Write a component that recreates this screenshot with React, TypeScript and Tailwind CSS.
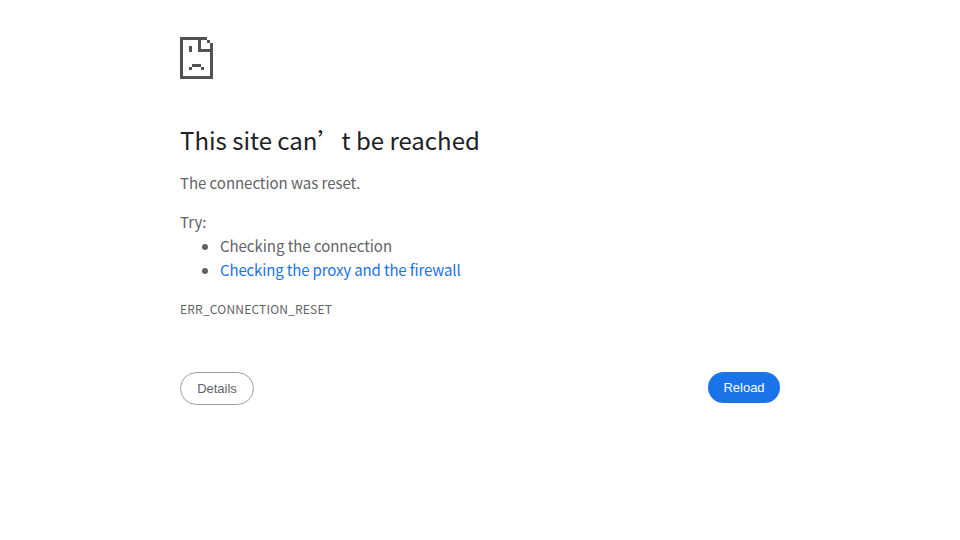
export default function App() {
  const cells = [
    [0,0,9,1],[0,1,1,13],[0,13,11,1],[10,2,1,11],
    [6,1,1,4],[7,4,3,1],[9,1,1,1],
    [3,3,1,2],
    [4,9,3,1],[3,10,1,1],[7,10,1,1],
  ];
  return (
    <div className="min-h-[540px] bg-white font-['Noto_Sans_CJK_SC',sans-serif] text-[15px] text-[#5f6368]">
      <div className="mx-auto w-[600px] pt-[37px]">
        <svg viewBox="0 0 11 14" width="33" height="42" shapeRendering="crispEdges" fill="#525252" className="block">
          {cells.map(([x, y, w, h], i) => <rect key={i} x={x} y={y} width={w} height={h} />)}
        </svg>
        <h1 className="mt-[46px] text-[24px] leading-[30px] font-normal text-[#202124]">This site can’t be reached</h1>
        <p className="mt-[16px] leading-[24px] tracking-[-0.04px]">The connection was reset.</p>
        <p className="mt-[15px] leading-[24px]">Try:</p>
        <ul className="list-disc pl-[40px]">
          <li className="leading-[24px] tracking-[-0.04px]">Checking the connection</li>
          <li className="leading-[24px] tracking-[-0.14px]"><span className="text-[#1a73e8]">Checking the proxy and the firewall</span></li>
        </ul>
        <p className="mt-[18px] text-[12px] leading-[18px] tracking-[0.2px]">ERR_CONNECTION_RESET</p>
        <div className="mt-[54px] flex items-start justify-between font-['Liberation_Sans',sans-serif] text-[13px]">
          <button className="h-[33px] w-[74px] rounded-full border border-[#9aa0a6] bg-white text-[#5f6368]">Details</button>
          <button className="h-[31px] w-[72px] rounded-full bg-[#1a73e8] text-white">Reload</button>
        </div>
      </div>
    </div>
  );
}
